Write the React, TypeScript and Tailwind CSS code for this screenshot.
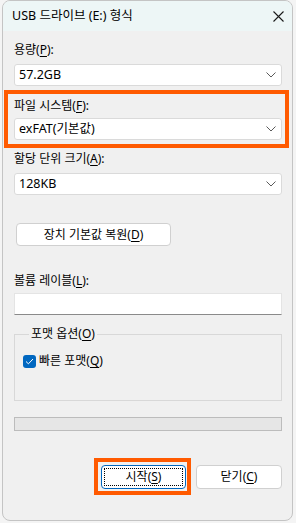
import React from 'react';

const Chevron = () => (
  <svg width="10" height="6" viewBox="0 0 10 6" className="shrink-0">
    <path d="M0.5 0.5 L5 5 L9.5 0.5" fill="none" stroke="#5a5a5a" strokeWidth="1" />
  </svg>
);

const Key = ({ k }: { k: string }) => <span className="underline underline-offset-[2px]">{k}</span>;

const Select = ({ value }: { value: string }) => (
  <div className="h-[22px] flex items-center justify-between bg-white border border-[#dadada] rounded-[3px] pl-[4px] pr-[5px] text-[12.5px] text-black">
    <span>{value}</span>
    <Chevron />
  </div>
);

const Label = ({ children }: { children: React.ReactNode }) => (
  <div className="h-[16px] leading-[16px] text-[12px] text-black">{children}</div>
);

export default function App() {
  return (
    <div className="w-[296px] h-[523px] bg-[#f4f4f4] flex font-['Noto_Sans','Noto_Sans_CJK_KR',sans-serif]">
      <div className="ml-[2px] w-[291px] h-[521px] rounded-[8px] border border-[#c4c4c4] bg-[#f0f0f0] overflow-hidden flex flex-col">
        <div className="h-[30px] shrink-0 bg-[#edf6f6] flex items-center justify-between pl-[9px] pr-[8px]">
          <span className="text-[12.5px] text-black">USB 드라이브 (E:) 형식</span>
          <svg width="11" height="11" viewBox="0 0 11 11">
            <path d="M0.5 0.5 L10.5 10.5 M10.5 0.5 L0.5 10.5" stroke="#1a1a1a" strokeWidth="1.1" />
          </svg>
        </div>

        <div className="flex flex-col pl-[11px] pr-[10px] pt-[11px]">
          <Label>
            용량(<Key k="P" />):
          </Label>
          <div className="mt-[6px]">
            <Select value="57.2GB" />
          </div>

          <div className="mt-[4px] ml-[-10px] mr-[-7px] border-4 border-[#ff5a00] pl-[6px] pr-[3px] pt-[4px] pb-[4px]">
            <Label>
              파일 시스템(<Key k="F" />):
            </Label>
            <div className="mt-[4px]">
              <Select value="exFAT(기본값)" />
            </div>
          </div>

          <div className="mt-[3px]">
            <Label>
              할당 단위 크기(<Key k="A" />):
            </Label>
          </div>
          <div className="mt-[6px]">
            <Select value="128KB" />
          </div>

          <button className="mt-[28px] ml-[2px] w-[155px] h-[23px] bg-white border border-[#d0d0d0] rounded-[4px] text-[12px] text-black flex items-center justify-center">
            장치 기본값 복원(<Key k="D" />)
          </button>

          <div className="mt-[27px]">
            <Label>
              볼륨 레이블(<Key k="L" />):
            </Label>
          </div>
          <div className="mt-[4px] h-[22px] bg-white border-b border-[#8a8a8a] border-t border-x border-t-[#e4e4e4] border-x-[#e4e4e4]" />

          <fieldset className="mt-[11px] h-[75px] border border-[#d8d8d8] pl-[8px]">
            <legend className="ml-[6px] px-[2px] h-[16px] leading-[16px] text-[12px] text-black">
              포맷 옵션(<Key k="O" />)
            </legend>
            <div className="mt-[11px] flex items-center gap-[3px] h-[16px]">
              <span className="w-[13px] h-[13px] rounded-[3px] bg-[#0067c0] flex items-center justify-center">
                <svg width="9" height="7" viewBox="0 0 9 7">
                  <path d="M1 3.5 L3.4 5.8 L8 1" fill="none" stroke="#ffffff" strokeWidth="1" />
                </svg>
              </span>
              <span className="text-[12px] text-black leading-[16px]">
                빠른 포맷(<Key k="Q" />)
              </span>
            </div>
          </fieldset>

          <div className="mt-[16px] h-[14px] bg-[#e6e6e6] border border-[#bcbcbc]" />

          <div className="mt-[27px] flex items-center justify-end">
            <div className="border-4 border-[#ff5a00] pl-[3px] pr-[1px] pt-[3px] pb-[2px]">
              <button className="w-[85px] h-[24px] bg-white border border-[#0067c0] rounded-[4px] p-[2px] flex">
                <span className="flex-1 border border-dotted border-black flex items-center justify-center text-[12px] text-black">
                  시작(<Key k="S" />)
                </span>
              </button>
            </div>
            <button className="ml-[5px] w-[86px] h-[24px] bg-white border border-[#d0d0d0] rounded-[4px] flex items-center justify-center text-[12px] text-black">
              닫기(<Key k="C" />)
            </button>
          </div>
        </div>
      </div>
    </div>
  );
}
